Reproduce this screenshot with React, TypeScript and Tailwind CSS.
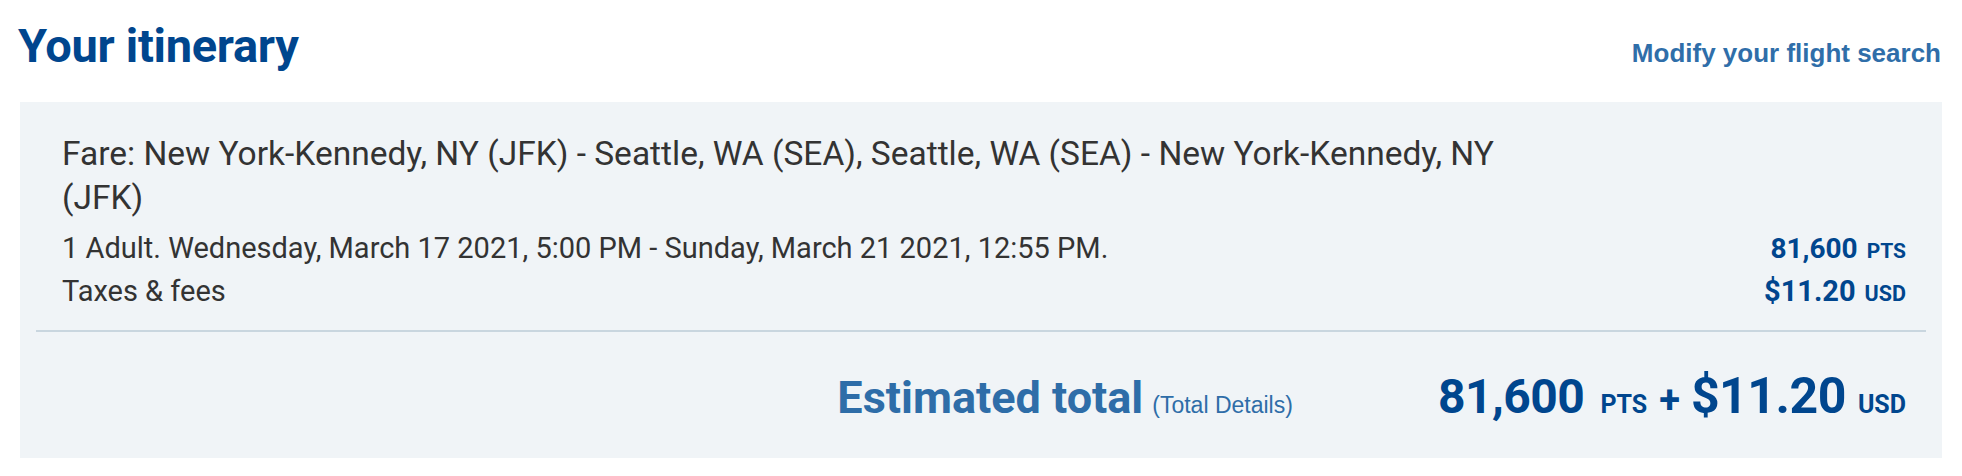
import React from "react";

const din = { fontFamily: "Roboto, 'Noto Sans', sans-serif" } as React.CSSProperties;
const arial = { fontFamily: "'Liberation Sans', Arial, sans-serif" } as React.CSSProperties;

export default function App() {
  return (
    <div className="w-[1962px] h-[476px] bg-white px-[20px]" style={din}>
      <div className="flex items-baseline justify-between pt-[18px] mb-[28px]">
        <h1 className="-ml-[2px] text-[47px] leading-[56px] font-bold text-[#00468e] tracking-[-0.3px]">
          Your itinerary
        </h1>
        <a className="text-[26px] leading-[32px] font-bold text-[#2f6ea9] pr-[1px]" style={arial}>
          Modify your flight search
        </a>
      </div>

      <div className="bg-[#f0f4f7] px-4 pt-[30px] pb-[31px]">
        <div className="pl-[26px] pr-[20px] text-[#333333]">
          <p className="text-[33.5px] leading-[44px] whitespace-nowrap">
            Fare: New York-Kennedy, NY (JFK) - Seattle, WA (SEA), Seattle, WA (SEA) - New York-Kennedy, NY
            <br />
            (JFK)
          </p>
          <div className="mt-[7px] flex items-baseline justify-between text-[29px] leading-[42px]">
            <span>1 Adult. Wednesday, March 17 2021, 5:00 PM - Sunday, March 21 2021, 12:55 PM.</span>
            <span className="font-bold text-[#00468e] text-[28px]">
              81,600<span className="text-[21px] leading-none ml-[9px]">PTS</span>
            </span>
          </div>
          <div className="flex items-baseline justify-between text-[29px] leading-[42px]">
            <span>Taxes &amp; fees</span>
            <span className="font-bold text-[#00468e] text-[29px]">
              $11.20<span className="text-[21.5px] leading-none ml-[9px]">USD</span>
            </span>
          </div>
        </div>

        <div className="mt-[18px] h-[2px] bg-[#c9d6df]" />

        <div className="mt-[34px] pr-[20px] flex items-baseline justify-end">
          <span className="text-[45px] leading-none font-bold text-[#2e6da8]">Estimated total</span>
          <span className="ml-[9px] text-[23px] leading-none text-[#2e6da8]" style={arial}>
            (Total Details)
          </span>
          <span className="ml-[145px] text-[48px] leading-[60px] font-bold text-[#00468e] tracking-[-0.5px]">
            81,600
          </span>
          <span className="ml-[16px] text-[25px] leading-none font-bold text-[#00468e]">PTS</span>
          <span className="ml-[12px] text-[38px] leading-none font-bold text-[#00468e]">+</span>
          <span className="ml-[11px] text-[50px] leading-[60px] font-bold text-[#00468e] tracking-[-0.5px]">
            $11.20
          </span>
          <span className="ml-[12px] text-[25px] leading-none font-bold text-[#00468e]">USD</span>
        </div>
      </div>
    </div>
  );
}
